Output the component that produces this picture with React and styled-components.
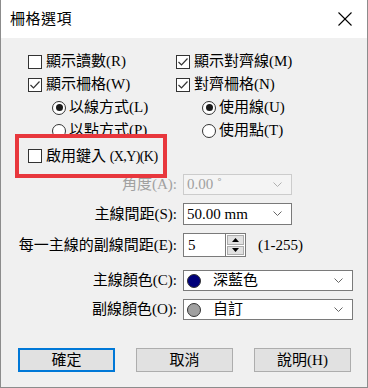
import styled, { createGlobalStyle } from "styled-components";

const GlobalStyle = createGlobalStyle`
  html, body {
    margin: 0;
    padding: 0;
    background: #f0f0f0;
  }
  body {
    font-family: "Liberation Serif", "Noto Sans CJK TC", serif;
    font-size: 15px;
    color: #000;
  }
`;

const Window = styled.div`
  box-sizing: border-box;
  width: 368px;
  height: 388px;
  display: flex;
  flex-direction: column;
  border: 1px solid #8c8c8c;
  border-top: none;
  background: #f0f0f0;
`;

const TitleBar = styled.div`
  height: 38px;
  flex: none;
  background: #fff;
  display: flex;
  align-items: center;
  justify-content: space-between;
  padding: 0 15px 0 9px;
`;

const Title = styled.div`
  font-size: 15px;
  line-height: 1;
  letter-spacing: 0.5px;
`;

const Body = styled.div`
  flex: 1;
  display: flex;
  flex-direction: column;
  padding-top: 12px;
`;

const OptionGrid = styled.div`
  display: grid;
  grid-template-columns: 148px auto;
  grid-auto-rows: 23px;
  padding-left: 27px;
`;

const Option = styled.label`
  display: flex;
  align-items: center;
  gap: ${(p) => (p.$radio ? "3px" : "4px")};
  padding-left: ${(p) => p.$indent || 0}px;
  line-height: 1;
  white-space: nowrap;
`;

const Latin = styled.span`
  font-size: 14px;
  letter-spacing: -0.6px;
`;

const Box = styled.span`
  box-sizing: border-box;
  width: 14px;
  height: 14px;
  flex: none;
  border: 1px solid #333;
  background: #fff;
  display: flex;
  align-items: center;
  justify-content: center;
`;

const Radio = styled.span`
  box-sizing: border-box;
  width: 14px;
  height: 14px;
  flex: none;
  border: 1px solid #333;
  border-radius: 50%;
  background: #fff;
  display: flex;
  align-items: center;
  justify-content: center;
  &::after {
    content: "";
    width: 7px;
    height: 7px;
    border-radius: 50%;
    background: ${(p) => (p.$on ? "#1a1a1a" : "transparent")};
  }
`;

const Highlight = styled.div`
  box-sizing: border-box;
  width: 152px;
  height: 44px;
  margin: -8px 0 0 14px;
  border: 4px solid #e8373d;
  background: #f0f0f0;
  display: flex;
  align-items: center;
  padding-left: 9px;
  position: relative;
`;

const FormRow = styled.div`
  display: grid;
  grid-template-columns: 176px auto;
  column-gap: 6px;
  align-items: center;
  margin-top: ${(p) => p.$top}px;
  height: ${(p) => p.$h || 21}px;
`;

const Label = styled.div`
  text-align: right;
  white-space: nowrap;
  line-height: 1;
  color: ${(p) => (p.$disabled ? "#a0a0a0" : "#000")};
`;

const Combo = styled.div`
  box-sizing: border-box;
  width: ${(p) => p.$w}px;
  height: ${(p) => p.$h || 21}px;
  border: 1px solid ${(p) => (p.$disabled ? "#cccccc" : "#7a7a7a")};
  background: ${(p) => (p.$disabled ? "#f4f4f4" : "#fff")};
  color: ${(p) => (p.$disabled ? "#a0a0a0" : "#000")};
  display: flex;
  align-items: center;
  padding: 0 9px 0 3px;
  line-height: 1;
`;

const ComboText = styled.span`
  flex: 1;
  display: flex;
  align-items: center;
  gap: 12px;
  white-space: nowrap;
`;

const Swatch = styled.span`
  box-sizing: border-box;
  width: 14px;
  height: 14px;
  border-radius: 50%;
  border: 1px solid #333;
  background: ${(p) => p.$color};
  flex: none;
`;

const SpinWrap = styled.div`
  display: flex;
  align-items: center;
`;

const SpinField = styled.div`
  box-sizing: border-box;
  width: 42px;
  height: 24px;
  border: 1px solid #7a7a7a;
  border-right: none;
  background: #fff;
  display: flex;
  align-items: center;
  padding-left: 4px;
`;

const SpinButtons = styled.div`
  box-sizing: border-box;
  width: 21px;
  height: 24px;
  border: 1px solid #7a7a7a;
  background: #fff;
  display: flex;
  flex-direction: column;
  gap: 1px;
  padding: 1px;
`;

const SpinBtn = styled.div`
  flex: 1;
  background: #e1e1e1;
  border: 1px solid #adadad;
  display: flex;
  align-items: center;
  justify-content: center;
`;

const Range = styled.span`
  margin-left: 12px;
  line-height: 1;
`;

const ButtonRow = styled.div`
  display: flex;
  gap: 21px;
  padding-left: 17px;
  margin-top: 28px;
`;

const Button = styled.div`
  box-sizing: border-box;
  width: 97px;
  height: 24px;
  background: #e1e1e1;
  border: ${(p) => (p.$primary ? "2px solid #0078d7" : "1px solid #adadad")};
  display: flex;
  align-items: center;
  justify-content: center;
  line-height: 1;
`;

const Check = () => (
  <svg width="12" height="12" viewBox="0 0 12 12">
    <polyline points="1.5,6 4.5,9 10.5,2.5" fill="none" stroke="#333" strokeWidth="1.2" />
  </svg>
);

const Chevron = ({ color = "#666" }) => (
  <svg width="9" height="6" viewBox="0 0 9 6">
    <polyline points="0.5,0.5 4.5,4.5 8.5,0.5" fill="none" stroke={color} strokeWidth="1" />
  </svg>
);

const Close = () => (
  <svg width="14" height="14" viewBox="0 0 14 14">
    <line x1="0.5" y1="0.5" x2="13.5" y2="13.5" stroke="#000" strokeWidth="1.1" />
    <line x1="13.5" y1="0.5" x2="0.5" y2="13.5" stroke="#000" strokeWidth="1.1" />
  </svg>
);

const Tri = ({ up }) => (
  <svg width="7" height="4" viewBox="0 0 7 4">
    <polygon points={up ? "0,4 7,4 3.5,0" : "0,0 7,0 3.5,4"} fill="#000" />
  </svg>
);

export default function App() {
  return (
    <>
      <GlobalStyle />
      <Window>
        <TitleBar>
          <Title>柵格選項</Title>
          <Close />
        </TitleBar>
        <Body>
          <OptionGrid>
            <Option>
              <Box />
              顯示讀數(R)
            </Option>
            <Option>
              <Box>
                <Check />
              </Box>
              顯示對齊線(M)
            </Option>
            <Option>
              <Box>
                <Check />
              </Box>
              顯示柵格(W)
            </Option>
            <Option>
              <Box>
                <Check />
              </Box>
              對齊柵格(N)
            </Option>
            <Option $radio $indent={24}>
              <Radio $on />
              以線方式(L)
            </Option>
            <Option $radio $indent={26}>
              <Radio $on />
              使用線(U)
            </Option>
            <Option $radio $indent={24}>
              <Radio />
              以點方式(P)
            </Option>
            <Option $radio $indent={26}>
              <Radio />
              使用點(T)
            </Option>
          </OptionGrid>

          <Highlight>
            <Option>
              <Box />
              <span>
                啟用鍵入 <Latin>(X,Y)(K)</Latin>
              </span>
            </Option>
          </Highlight>

          <FormRow $top={-4}>
            <Label $disabled>角度(A):</Label>
            <Combo $w={109} $disabled>
              <ComboText>0.00 ˚</ComboText>
              <Chevron color="#b0b0b0" />
            </Combo>
          </FormRow>
          <FormRow $top={8} $h={22}>
            <Label>主線間距(S):</Label>
            <Combo $w={109} $h={22}>
              <ComboText>50.00 mm</ComboText>
              <Chevron />
            </Combo>
          </FormRow>
          <FormRow $top={8} $h={24}>
            <Label>每一主線的副線間距(E):</Label>
            <SpinWrap>
              <SpinField>5</SpinField>
              <SpinButtons>
                <SpinBtn>
                  <Tri up />
                </SpinBtn>
                <SpinBtn>
                  <Tri />
                </SpinBtn>
              </SpinButtons>
              <Range>(1-255)</Range>
            </SpinWrap>
          </FormRow>
          <FormRow $top={13}>
            <Label>主線顏色(C):</Label>
            <Combo $w={170}>
              <ComboText>
                <Swatch $color="#00007a" />
                深藍色
              </ComboText>
              <Chevron />
            </Combo>
          </FormRow>
          <FormRow $top={8}>
            <Label>副線顏色(O):</Label>
            <Combo $w={170}>
              <ComboText>
                <Swatch $color="#a0a0a0" />
                自訂
              </ComboText>
              <Chevron />
            </Combo>
          </FormRow>

          <ButtonRow>
            <Button $primary>確定</Button>
            <Button>取消</Button>
            <Button>說明(H)</Button>
          </ButtonRow>
        </Body>
      </Window>
    </>
  );
}
